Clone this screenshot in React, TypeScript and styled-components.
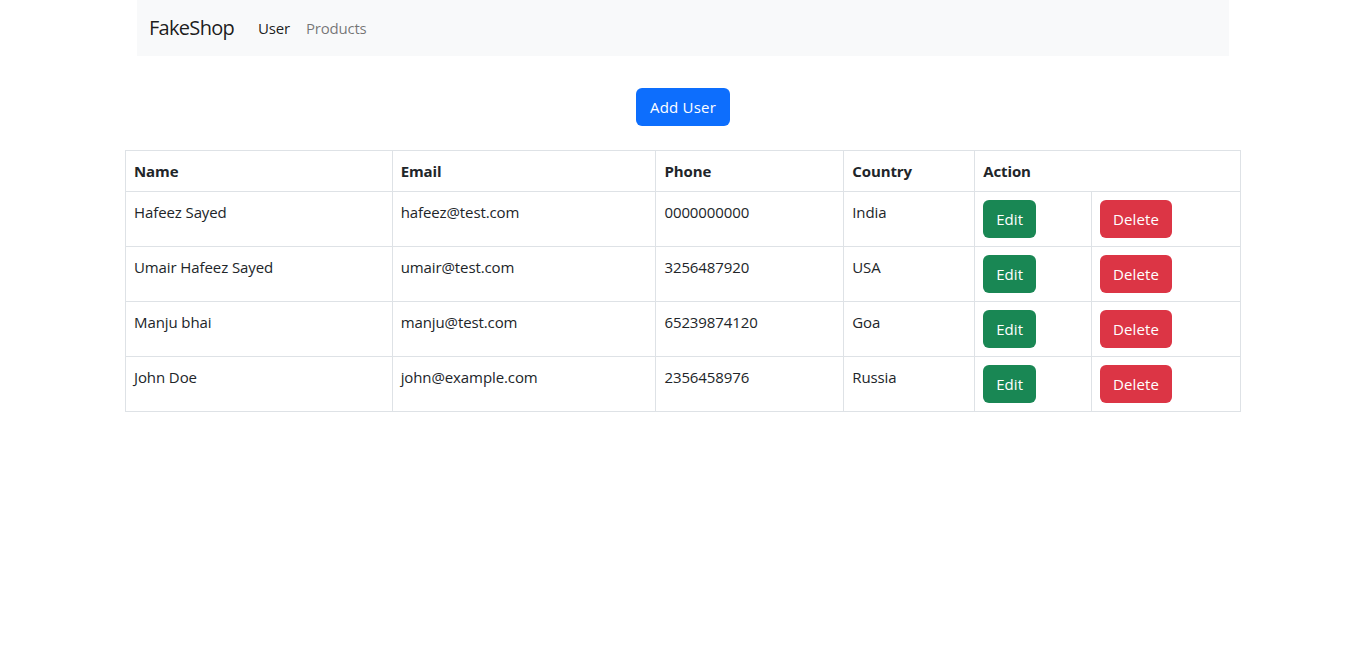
import React from "react";
import styled, { createGlobalStyle } from "styled-components";

const GlobalStyle = createGlobalStyle`
  * {
    box-sizing: border-box;
  }

  body {
    margin: 0;
    font-family: "Open Sans", "Noto Sans", sans-serif;
    font-size: 16px;
    line-height: 24px;
    color: #212529;
    background: #fff;
  }
`;

const Container = styled.div`
  width: 1140px;
  margin: 0 auto;
  padding: 0 12px;
`;

const Navbar = styled.nav`
  display: flex;
  align-items: center;
  height: 56px;
  padding: 8px 12px;
  margin: 0 12px;
  background: #f8f9fa;
`;

const Brand = styled.a`
  font-size: 20px;
  line-height: 30px;
  color: rgba(0, 0, 0, 0.9);
  text-decoration: none;
  margin-right: 16px;
  letter-spacing: -0.7px;
`;

const NavLink = styled.a<{ $active?: boolean }>`
  padding: 8px;
  font-size: 15px;
  color: ${(p) => (p.$active ? "rgba(0, 0, 0, 0.9)" : "rgba(0, 0, 0, 0.55)")};
  text-decoration: none;
  letter-spacing: -0.2px;
`;

const Toolbar = styled.div`
  display: flex;
  justify-content: center;
  margin: 32px 0 24px;
`;

const Button = styled.button<{ $variant: "primary" | "success" | "danger" }>`
  font-family: inherit;
  font-size: 15px;
  line-height: 24px;
  padding: 6px 12px;
  border: 1px solid transparent;
  border-radius: 6px;
  color: #fff;
  cursor: pointer;
  letter-spacing: 0.1px;
  background: ${(p) =>
    p.$variant === "primary" ? "#0d6efd" : p.$variant === "success" ? "#198754" : "#dc3545"};
`;

const PrimaryButton = styled(Button)`
  padding: 6px 13px;
  letter-spacing: 0.2px;
`;

const Table = styled.table`
  width: 100%;
  border-collapse: collapse;
  border: 1px solid #dee2e6;
  font-size: 15px;
  letter-spacing: -0.1px;
`;

const Th = styled.th`
  text-align: left;
  font-weight: 700;
  padding: 8px;
  border: 1px solid #dee2e6;
  vertical-align: top;
`;

const Td = styled.td`
  padding: 8px;
  border: 1px solid #dee2e6;
  vertical-align: top;
`;

const users = [
  { name: "Hafeez Sayed", email: "hafeez@test.com", phone: "0000000000", country: "India" },
  { name: "Umair Hafeez Sayed", email: "umair@test.com", phone: "3256487920", country: "USA" },
  { name: "Manju bhai", email: "manju@test.com", phone: "65239874120", country: "Goa" },
  { name: "John Doe", email: "john@example.com", phone: "2356458976", country: "Russia" },
];

export default function App() {
  return (
    <>
      <GlobalStyle />
      <Container>
        <Navbar>
          <Brand href="#">FakeShop</Brand>
          <NavLink href="#" $active>User</NavLink>
          <NavLink href="#">Products</NavLink>
        </Navbar>
      </Container>
      <Container>
        <Toolbar>
          <PrimaryButton $variant="primary">Add User</PrimaryButton>
        </Toolbar>
        <Table>
          <colgroup>
            <col style={{ width: 267 }} />
            <col style={{ width: 264 }} />
            <col style={{ width: 188 }} />
            <col style={{ width: 131 }} />
            <col style={{ width: 117 }} />
            <col style={{ width: 149 }} />
          </colgroup>
          <thead>
            <tr>
              <Th>Name</Th>
              <Th>Email</Th>
              <Th>Phone</Th>
              <Th>Country</Th>
              <Th colSpan={2}>Action</Th>
            </tr>
          </thead>
          <tbody>
            {users.map((u) => (
              <tr key={u.email}>
                <Td>{u.name}</Td>
                <Td>{u.email}</Td>
                <Td>{u.phone}</Td>
                <Td>{u.country}</Td>
                <Td>
                  <Button $variant="success">Edit</Button>
                </Td>
                <Td>
                  <Button $variant="danger">Delete</Button>
                </Td>
              </tr>
            ))}
          </tbody>
        </Table>
      </Container>
    </>
  );
}
